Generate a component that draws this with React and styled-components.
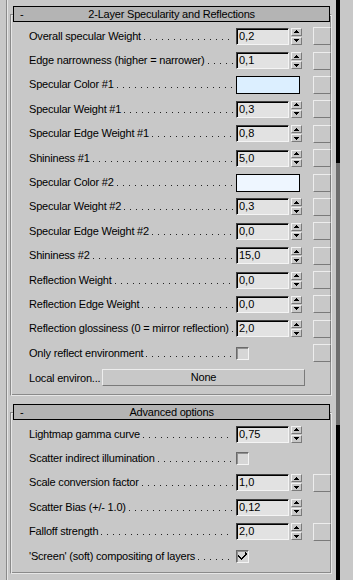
import React from 'react'
import styled, { createGlobalStyle } from 'styled-components'

const GlobalStyle = createGlobalStyle`
  html, body {
    margin: 0;
    padding: 0;
    background: #c8c8c8;
  }
  body {
    font-family: "Liberation Sans", Arial, sans-serif;
    font-size: 11px;
    letter-spacing: -0.2px;
    color: #000;
  }
`

const Page = styled.div`
  display: flex;
  width: 353px;
  height: 580px;
  overflow: hidden;
  background: #c8c8c8;
`

const Panel = styled.div`
  width: 326px;
  margin-left: 6px;
  padding-left: 3px;
  border-left: 1px solid #8a8a8a;
  box-shadow: inset 1px 0 0 #e6e6e6;
  padding-top: 6px;
`

const ScrollStrip = styled.div`
  width: 17px;
  display: flex;
  padding-left: 4px;
`

const ScrollBar = styled.div`
  width: 4px;
  height: 580px;
  background: linear-gradient(
    to bottom,
    #000 0,
    #000 163px,
    #6e6e6e 163px,
    #6e6e6e 425px,
    #000 425px
  );
`

const Rollout = styled.section`
  margin-top: ${p => p.$gap || 0}px;
`

const RollHeader = styled.div`
  position: relative;
  z-index: 1;
  display: grid;
  grid-template-columns: 20px 1fr 20px;
  align-items: center;
  height: 14px;
  margin: 0 2px 0 3px;
  border: 1px solid #000;
  background: #b4b4b4;
  line-height: 14px;
`

const Minus = styled.span`
  padding-left: 6px;
`

const RollTitle = styled.span`
  text-align: center;
`

const Frame = styled.div`
  margin-top: -8px;
  padding: 9px 0 5px;
  border: 1px solid;
  border-color: #8a8a8a #e6e6e6 #e6e6e6 #8a8a8a;
  box-shadow: inset 1px 1px 0 #e6e6e6, inset -1px -1px 0 #8a8a8a;
`

const Row = styled.div`
  display: flex;
  align-items: center;
  height: 24.4px;
  padding-left: 18px;
`

const Label = styled.div`
  display: flex;
  align-items: baseline;
  width: 207px;
  white-space: nowrap;
  line-height: 13px;
`

const Leader = styled.span`
  display: inline-block;
  flex: 1;
  height: 1px;
  margin: 0 3px 0 3px;
  background-image: linear-gradient(to right, #222 1px, transparent 1px);
  background-size: 6px 1px;
  background-repeat: repeat-x;
`

const Slot = styled.div`
  display: flex;
  align-items: center;
  width: 66px;
`

const Field = styled.div`
  box-sizing: border-box;
  width: 53px;
  height: 17px;
  padding-left: 2px;
  border: 1px solid;
  border-color: #404040 #f4f4f4 #f4f4f4 #404040;
  box-shadow: inset 1px 1px 0 #000;
  background: #e2e2e2;
  line-height: 15px;
  letter-spacing: 0;
`

const Arrows = styled.div`
  display: flex;
  flex-direction: column;
  gap: 1px;
  margin-left: 2px;
`

const ArrowBtn = styled.div`
  box-sizing: border-box;
  display: flex;
  align-items: center;
  justify-content: center;
  width: 11px;
  height: 8px;
  border: 1px solid;
  border-color: #f2f2f2 #7a7a7a #7a7a7a #f2f2f2;
  background: #c8c8c8;
`

const Swatch = styled.div`
  box-sizing: border-box;
  width: 64px;
  height: 18px;
  border: 1px solid #000;
  background: ${p => p.$color};
`

const Check = styled.div`
  box-sizing: border-box;
  display: flex;
  align-items: center;
  justify-content: center;
  width: 13px;
  height: 13px;
  border: 1px solid;
  border-color: #6a6a6a #f4f4f4 #f4f4f4 #6a6a6a;
  box-shadow: inset 1px 1px 0 #909090;
  background: #d6d6d6;
`

const SquareBtn = styled.div`
  box-sizing: border-box;
  width: 18px;
  height: 18px;
  margin-left: 11px;
  border: 1px solid;
  border-color: #ededed #7a7a7a #7a7a7a #ededed;
`

const MapLabel = styled.div`
  width: 73px;
  white-space: nowrap;
`

const MapBtn = styled.div`
  box-sizing: border-box;
  width: 203px;
  height: 17px;
  border: 1px solid;
  border-color: #ededed #7a7a7a #7a7a7a #ededed;
  text-align: center;
  line-height: 15px;
`

const Tri = ({ down }) => (
  <svg width="5" height="3" viewBox="0 0 5 3" shapeRendering="crispEdges"
    style={down ? { transform: 'scaleY(-1)' } : undefined}>
    <path d="M2 0h1v1h1v1h1v1H0V2h1V1h1z" fill="#000" />
  </svg>
)

const Spinner = ({ value }) => (
  <>
    <Field>{value}</Field>
    <Arrows>
      <ArrowBtn><Tri /></ArrowBtn>
      <ArrowBtn><Tri down /></ArrowBtn>
    </Arrows>
  </>
)

const CheckBox = ({ checked }) => (
  <Check>
    {checked && (
      <svg width="9" height="8" viewBox="0 0 9 8" shapeRendering="crispEdges">
        <path d="M7 0h1v1h1v2H8v1H7v1H6v1H5v1H4v1H3V7H2V6H1V5H0V3h1v1h1v1h1v1h1V5h1V4h1V3h1V2h0V1h0z" fill="#000" />
      </svg>
    )}
  </Check>
)

const ParamRow = ({ label, kind, value, btn }) => (
  <Row>
    <Label>
      {label}
      <Leader />
    </Label>
    <Slot>
      {kind === 'spin' && <Spinner value={value} />}
      {kind === 'color' && <Swatch $color={value} />}
      {kind === 'check' && <CheckBox checked={value} />}
    </Slot>
    {btn && <SquareBtn />}
  </Row>
)

const specular = [
  { label: 'Overall specular Weight', kind: 'spin', value: '0,2', btn: true },
  { label: 'Edge narrowness (higher = narrower)', kind: 'spin', value: '0,1', btn: true },
  { label: 'Specular Color #1', kind: 'color', value: '#dcefff', btn: true },
  { label: 'Specular Weight #1', kind: 'spin', value: '0,3', btn: true },
  { label: 'Specular Edge Weight #1', kind: 'spin', value: '0,8', btn: true },
  { label: 'Shininess #1', kind: 'spin', value: '5,0', btn: true },
  { label: 'Specular Color #2', kind: 'color', value: '#eef6ff', btn: true },
  { label: 'Specular Weight #2', kind: 'spin', value: '0,3', btn: true },
  { label: 'Specular Edge Weight #2', kind: 'spin', value: '0,0', btn: true },
  { label: 'Shininess #2', kind: 'spin', value: '15,0', btn: true },
  { label: 'Reflection Weight', kind: 'spin', value: '0,0', btn: true },
  { label: 'Reflection Edge Weight', kind: 'spin', value: '0,0', btn: true },
  { label: 'Reflection glossiness (0 = mirror reflection)', kind: 'spin', value: '2,0', btn: true },
  { label: 'Only reflect environment', kind: 'check', value: false, btn: true },
]

const advanced = [
  { label: 'Lightmap gamma curve', kind: 'spin', value: '0,75' },
  { label: 'Scatter indirect illumination', kind: 'check', value: false },
  { label: 'Scale conversion factor', kind: 'spin', value: '1,0', btn: true },
  { label: 'Scatter Bias (+/- 1.0)', kind: 'spin', value: '0,12' },
  { label: 'Falloff strength', kind: 'spin', value: '2,0', btn: true },
  { label: "'Screen' (soft) compositing of layers", kind: 'check', value: true },
]

export default function App() {
  return (
    <Page>
      <GlobalStyle />
      <Panel>
        <Rollout>
          <RollHeader>
            <Minus>-</Minus>
            <RollTitle>2-Layer Specularity and Reflections</RollTitle>
          </RollHeader>
          <Frame>
            {specular.map(p => <ParamRow key={p.label} {...p} />)}
            <Row>
              <MapLabel>Local environ...</MapLabel>
              <MapBtn>None</MapBtn>
            </Row>
          </Frame>
        </Rollout>
        <Rollout $gap={8}>
          <RollHeader>
            <Minus>-</Minus>
            <RollTitle>Advanced options</RollTitle>
          </RollHeader>
          <Frame>
            {advanced.map(p => <ParamRow key={p.label} {...p} />)}
          </Frame>
        </Rollout>
      </Panel>
      <ScrollStrip>
        <ScrollBar />
      </ScrollStrip>
    </Page>
  )
}
